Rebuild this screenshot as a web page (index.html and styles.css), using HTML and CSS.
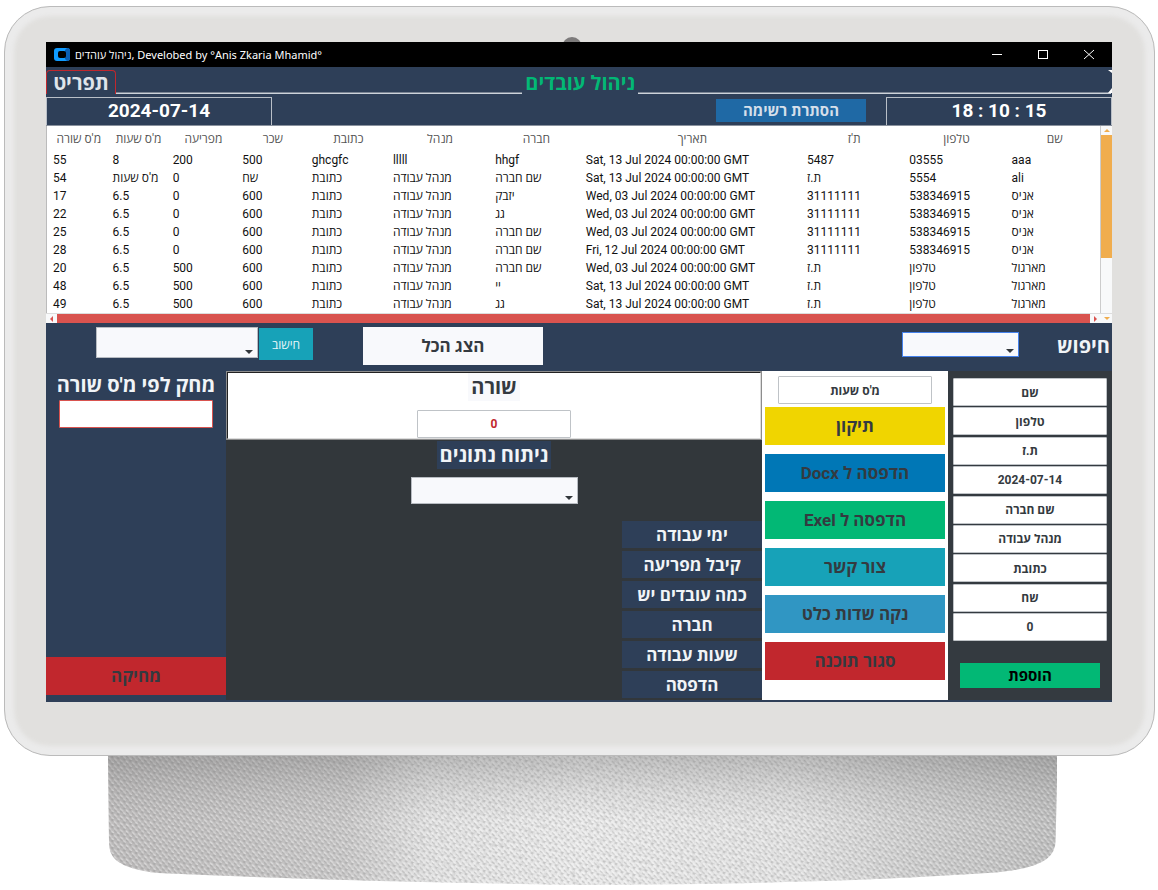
FILE: index.html
```html
<!DOCTYPE html>
<html lang="he">
<head>
<meta charset="utf-8">
<title>ניהול עובדים</title>
<link rel="stylesheet" href="styles.css">
</head>
<body>
<div class="device">
  <span class="camera"></span>
  <main class="screen">
    <header class="titlebar">
      <svg class="logo" viewBox="0 0 16 14" width="16" height="14" aria-hidden="true"><rect width="16" height="13" rx="3" fill="#0f9bff"/><path d="M13 0a3 3 0 0 1 3 3v7a3 3 0 0 1-3 3l-2-2V2z" fill="#0a5fb4"/><rect x="4" y="3" width="8" height="7" rx="2" fill="#000"/></svg>
      <h1 class="caption">ניהול עוהדים, Develobed by °Anis Zkaria Mhamid°</h1>
      <div class="window-buttons">
        <button aria-label="Minimize"><svg viewBox="0 0 12 12" width="12" height="12"><path d="M1 5.500h10" stroke="#fff" fill="none"/></svg></button>
        <button aria-label="Maximize"><svg viewBox="0 0 12 12" width="12" height="12"><rect x="1.500" y="1.500" width="9" height="8" stroke="#fff" fill="none"/></svg></button>
        <button aria-label="Close"><svg viewBox="0 0 12 12" width="12" height="12"><path d="M1 1l10 9M11 1L1 10" stroke="#fff" fill="none"/></svg></button>
      </div>
    </header>
    <nav class="menu-row">
      <button class="tab">תפריט</button>
      <span class="rule"></span>
      <h2 class="heading">ניהול עובדים</h2>
      <span class="rule"></span>
      <svg class="menu-end" viewBox="0 0 4 24" width="4" height="24" aria-hidden="true"><path d="M0 0h4v3zM4 18v5H0z" fill="#fff"/></svg>
    </nav>
    <div class="clock-row">
      <div class="readout">2024-07-14</div>
      <button class="hide-list">הסתרת רשימה</button>
      <div class="readout">18 : 10 : 15</div>
    </div>
    <section class="list">
      <table class="records">
        <colgroup><col class="w-id"><col class="w-id"><col class="w-pay"><col class="w-pay"><col class="w-address"><col class="w-manager"><col class="w-company"><col class="w-date"><col class="w-manager"><col class="w-manager"><col></colgroup>
        <thead><tr><th>מ'ס שורה</th><th>מ'ס שעות</th><th>מפריעה</th><th>שכר</th><th>כתובת</th><th>מנהל</th><th>חברה</th><th>תאריך</th><th>ת'ז</th><th>טלפון</th><th>שם</th></tr></thead>
        <tbody>
          <tr><td>55</td><td>8</td><td>200</td><td>500</td><td>ghcgfc</td><td>lllll</td><td>hhgf</td><td>Sat, 13 Jul 2024 00:00:00 GMT</td><td>5487</td><td>03555</td><td>aaa</td></tr>
          <tr><td>54</td><td>מ'ס שעות</td><td>0</td><td>שח</td><td>כתובת</td><td>מנהל עבודה</td><td>שם חברה</td><td>Sat, 13 Jul 2024 00:00:00 GMT</td><td>ת.ז</td><td>5554</td><td>ali</td></tr>
          <tr><td>17</td><td>6.5</td><td>0</td><td>600</td><td>כתובת</td><td>מנהל עבודה</td><td>יזבק</td><td>Wed, 03 Jul 2024 00:00:00 GMT</td><td>31111111</td><td>538346915</td><td>אניס</td></tr>
          <tr><td>22</td><td>6.5</td><td>0</td><td>600</td><td>כתובת</td><td>מנהל עבודה</td><td>גג</td><td>Wed, 03 Jul 2024 00:00:00 GMT</td><td>31111111</td><td>538346915</td><td>אניס</td></tr>
          <tr><td>25</td><td>6.5</td><td>0</td><td>600</td><td>כתובת</td><td>מנהל עבודה</td><td>שם חברה</td><td>Wed, 03 Jul 2024 00:00:00 GMT</td><td>31111111</td><td>538346915</td><td>אניס</td></tr>
          <tr><td>28</td><td>6.5</td><td>0</td><td>600</td><td>כתובת</td><td>מנהל עבודה</td><td>שם חברה</td><td>Fri, 12 Jul 2024 00:00:00 GMT</td><td>31111111</td><td>538346915</td><td>אניס</td></tr>
          <tr><td>20</td><td>6.5</td><td>500</td><td>600</td><td>כתובת</td><td>מנהל עבודה</td><td>שם חברה</td><td>Wed, 03 Jul 2024 00:00:00 GMT</td><td>ת.ז</td><td>טלפון</td><td>מארגול</td></tr>
          <tr><td>48</td><td>6.5</td><td>500</td><td>600</td><td>כתובת</td><td>מנהל עבודה</td><td>יי</td><td>Sat, 13 Jul 2024 00:00:00 GMT</td><td>ת.ז</td><td>טלפון</td><td>מארגול</td></tr>
          <tr><td>49</td><td>6.5</td><td>500</td><td>600</td><td>כתובת</td><td>מנהל עבודה</td><td>גג</td><td>Sat, 13 Jul 2024 00:00:00 GMT</td><td>ת.ז</td><td>טלפון</td><td>מארגול</td></tr>
        </tbody>
      </table>
      <div class="scroll-y"><span class="arrow up"></span><span class="thumb"></span></div>
      <div class="scroll-x"><span class="arrow left"></span><span class="thumb"></span><span class="arrow right"></span><span class="arrow down"></span></div>
    </section>
    <div class="toolbar">
      <span class="combo calc"><select aria-label="חישוב"><option></option></select></span>
      <button class="calc-button">חישוב</button>
      <button class="show-all">הצג הכל</button>
      <span class="combo search"><select id="search"><option></option></select></span>
      <label class="search-label" for="search">חיפוש</label>
    </div>
    <div class="panels">
      <section class="delete-panel">
        <label for="row-id">מחק לפי מ'ס שורה</label>
        <input id="row-id" class="entry danger">
        <button class="big red">מחיקה</button>
      </section>
      <section class="center-panel">
        <div class="row-box">
          <label for="row-no">שורה</label>
          <input id="row-no" class="entry number" value="0">
        </div>
        <label class="analysis" for="analysis">ניתוח נתונים</label>
        <span class="combo stats"><select id="analysis"><option></option></select></span>
        <div class="stat-buttons">
          <button>ימי עבודה</button>
          <button>קיבל מפריעה</button>
          <button>כמה עובדים יש</button>
          <button>חברה</button>
          <button>שעות עבודה</button>
          <button>הדפסה</button>
        </div>
      </section>
      <section class="action-panel">
        <input class="entry" aria-label="מ'ס שעות" dir="rtl" value="מ'ס שעות">
        <div class="actions" dir="rtl">
          <button class="big yellow">תיקון</button>
          <button class="big blue">הדפסה ל Docx</button>
          <button class="big green">הדפסה ל Exel</button>
          <button class="big teal">צור קשר</button>
          <button class="big sky">נקה שדות כלט</button>
          <button class="big red">סגור תוכנה</button>
        </div>
      </section>
      <form class="add-panel">
        <div class="fields">
          <input class="entry" aria-label="שם" value="שם">
          <input class="entry" aria-label="טלפון" value="טלפון">
          <input class="entry" aria-label="ת.ז" value="ת.ז">
          <input class="entry" aria-label="תאריך" value="2024-07-14">
          <input class="entry" aria-label="שם חברה" value="שם חברה">
          <input class="entry" aria-label="מנהל עבודה" value="מנהל עבודה">
          <input class="entry" aria-label="כתובת" value="כתובת">
          <input class="entry" aria-label="שכר" value="שח">
          <input class="entry" aria-label="מפריעה" value="0">
        </div>
        <button class="add" type="button">הוספת</button>
      </form>
    </div>
  </main>
</div>
<svg class="stand" viewBox="0 0 950 129" preserveAspectRatio="none" aria-hidden="true">
  <defs>
    <pattern id="weave" width="6" height="7" patternUnits="userSpaceOnUse" patternTransform="skewY(12)">
      <path d="M0 1l3 2M3 4l3 2" stroke="#fff" stroke-opacity=".4" stroke-width="1.600"/>
      <path d="M0 3l3 2M3 6l3 1M3 0l2 1" stroke="#777" stroke-opacity=".3" stroke-width="1.200"/>
    </pattern>
    <linearGradient id="sides" x2="1" y2="0">
      <stop offset="0" stop-color="#bdbbbb"/><stop offset=".25" stop-color="#c8c7c7"/><stop offset=".34" stop-color="#e4e4e4"/><stop offset=".5" stop-color="#ececec"/><stop offset=".72" stop-color="#e4e4e4"/><stop offset=".85" stop-color="#cecece"/><stop offset="1" stop-color="#bdbdbd"/>
    </linearGradient>
    <linearGradient id="shade" x2="0" y2="1">
      <stop offset="0" stop-color="#666" stop-opacity=".32"/><stop offset=".3" stop-color="#777" stop-opacity=".1"/><stop offset=".5" stop-color="#777" stop-opacity="0"/>
    </linearGradient>
    <filter id="grain" x="0" y="0" width="1" height="1">
      <feTurbulence type="fractalNoise" baseFrequency=".25" numOctaves="2" seed="4"/>
      <feColorMatrix values="0 0 0 0 .4  0 0 0 0 .4  0 0 0 0 .4  .7 0 0 0 -.3"/>
      <feComposite in2="SourceGraphic" operator="in"/>
    </filter>
    <path id="base" d="M0 0H950L948 85Q948 96 939 103Q925 114 880 117Q720 128 475 129Q250 126 50 117Q20 114 8 104Q1 98 1 86Z"/>
  </defs>
  <use href="#base" fill="url(#sides)"/>
  <use href="#base" fill="url(#weave)"/>
  <use href="#base" filter="url(#grain)"/>
  <use href="#base" fill="url(#shade)"/>
</svg>
</body>
</html>
```

FILE: styles.css
```css
* { box-sizing: border-box; }

body {
  margin: 0;
  padding: 6px 3px 4px 4px;
  background: #fff;
  color: #111;
  font-family: Roboto, "Open Sans", "Noto Sans", "DejaVu Sans", sans-serif;
  font-size: 12px;
}

button, input, select { font: inherit; margin: 0; border: 0; padding: 0; border-radius: 0; }
button { cursor: pointer; }
h1, h2 { margin: 0; font-size: inherit; }

.device {
  position: relative;
  padding: 35px 42px 53px 41px;
  border: 1px solid #bbb;
  border-radius: 46px;
  background: #e1e0de;
  box-shadow: inset 0 0 4px 9px #ebebeb;
}
.camera {
  position: absolute;
  top: 30px;
  left: 557px;
  width: 20px;
  height: 20px;
  border-radius: 50%;
  background: #7d7b7b;
}
.screen { position: relative; background: #2e3f58; }

.titlebar { display: flex; align-items: center; height: 25px; padding-left: 8px; background: #000; color: #fff; }
.logo { flex: none; margin-right: 5px; }
.caption { flex: 1; font-size: 11px; font-weight: 400; line-height: 23px; font-family: "Noto Sans", "Open Sans", sans-serif; }
.window-buttons { display: flex; }
.window-buttons button { display: grid; place-items: center; width: 46px; height: 25px; background: none; }

.menu-row { display: flex; align-items: flex-end; height: 30px; padding-bottom: 3px; }
.tab {
  width: 70px;
  height: 24px;
  border: 1px solid #c1272d;
  border-bottom: 0;
  border-radius: 4px 4px 0 0;
  background: none;
  color: #dfe4ea;
  font-size: 20px;
  font-weight: 700;
  line-height: 24px;
}
.rule { flex: 1; height: 2px; border-bottom: 1px solid #cdd3da; background: #7b8594; }
.heading { padding: 0 3px; color: #02b875; font-size: 20px; line-height: 22px; }
.heading + .rule { flex: 0 1 473px; }
.menu-end { flex: none; margin-left: -3px; }

.clock-row { display: flex; align-items: stretch; height: 29px; border-bottom: 1px solid #8a929e; }
.readout {
  width: 226px;
  border: 1px solid #b9bfc7;
  border-bottom: 0;
  color: #fff;
  font-size: 19px;
  font-weight: 700;
  line-height: 26px;
  text-align: center;
}
.hide-list { width: 150px; height: 23px; margin: 2px 20px 0 auto; background: #1f69a5; color: #d5dfea; font-size: 15px; font-weight: 700; line-height: 22px; }

.list { display: grid; grid-template-columns: 1fr 11px; background: #fff; }
.records { width: 100%; table-layout: fixed; border-collapse: collapse; border-left: 1px solid #bbb; border-right: 1px solid #ccc; }
.w-id { width: 5.7%; }
.w-pay { width: 6.6%; }
.w-address { width: 7.7%; }
.w-manager { width: 9.7%; }
.w-company { width: 8.6%; }
.w-date { width: 21%; }
.records th { height: 25px; padding: 0 0 0 4px; color: #555; font-size: 12px; font-weight: 400; overflow: hidden; white-space: nowrap; }
.records td { height: 18px; padding: 0 0 0 6px; white-space: nowrap; line-height: 18px; }

.scroll-y { display: flex; flex-direction: column; background: #f8f9fa; }
.scroll-y .arrow { height: 9px; }
.scroll-y .thumb { height: 123px; background: #f0ad4e; }
.scroll-x { grid-column: 1 / -1; display: flex; height: 10px; border-top: 1px solid #ddd; background: #f8f9fa; }
.scroll-x .arrow { width: 11px; }
.scroll-x .thumb { flex: 1; background: #d9534f; }
.arrow { display: grid; place-items: center; }
.arrow::before { content: ""; border: 3px solid transparent; }
.arrow.up::before { border-top: 0; border-bottom-color: #f0ad4e; }
.arrow.down::before { border-bottom: 0; border-top-color: #f0ad4e; }
.arrow.left::before { border-left: 0; border-right-color: #d9534f; }
.arrow.right::before { border-right: 0; border-left-color: #d9534f; }

.toolbar { display: flex; align-items: flex-start; height: 48px; padding: 4px 2px 0 50px; }
.combo { position: relative; display: block; }
.combo select { display: block; width: 100%; height: 100%; border: 1px solid #b8bcc2; background: #f8f9fc; appearance: none; }
.combo::after { content: ""; position: absolute; right: 5px; bottom: 4px; border: 4px solid transparent; border-top-color: #32373b; border-bottom: 0; pointer-events: none; }
.calc { width: 162px; height: 31px; margin-right: 1px; }
.calc-button { width: 54px; height: 32px; margin: 1px 50px 0 0; background: #17a2b8; color: #e8f6f8; }
.show-all { width: 180px; height: 38px; background: #f8f9fc; color: #343a40; font-size: 17px; font-weight: 700; line-height: 36px; }
.search { width: 117px; height: 25px; margin: 5px 0 0 auto; }
.search select { border-color: #4582ec; }
.search-label { width: 91px; color: #f1f4f7; font-size: 20px; font-weight: 700; line-height: 38px; text-align: right; }

.panels { display: grid; grid-template-columns: 180px 1fr 186px 164px; min-height: 331px; padding-bottom: 2px; }
.entry { display: block; width: 154px; height: 28px; border: 1px solid #bfc3c7; border-radius: 1px; background: #fff; color: #343a40; font-size: 12px; font-weight: 700; text-align: center; }
.big { display: block; width: 100%; height: 38px; color: #343a40; font-size: 17px; font-weight: 700; line-height: 36px; }
.red { background: #c1272d; }
.yellow { background: #f0d500; }
.blue { background: #0077b6; }
.green { background: #02b875; }
.teal { background: #17a2b8; }
.sky { background: #3096c3; }

.delete-panel { display: flex; flex-direction: column; align-items: center; padding-bottom: 5px; color: #f1f4f7; font-size: 20px; font-weight: 700; line-height: 29px; white-space: nowrap; }
.delete-panel .big { margin-top: auto; }
.danger { border-color: #d9534f; }

.center-panel { display: flex; flex-direction: column; align-items: center; background: #32373b; }
.row-box { align-self: stretch; display: flex; flex-direction: column; align-items: center; height: 69px; border: 2px solid #dcdcdc; border-top-color: #222; border-left-color: #222; outline: 1px solid #8d8d8d; outline-offset: -1px; background: #fff; }
.row-box label { padding: 0 3px; background: #f8f9fc; color: #343a40; font-size: 20px; font-weight: 700; line-height: 28px; }
.row-box .entry { margin-top: 9px; }
.number { color: #c1272d; }
.analysis { margin-top: 1px; padding: 0 3px; background: #2e3f58; color: #f1f4f7; font-size: 20px; font-weight: 700; line-height: 28px; }
.stats { width: 167px; height: 27px; margin-top: 8px; }
.stat-buttons { align-self: flex-end; display: grid; gap: 3px; width: 140px; margin: auto 0 2px; }
.stat-buttons button { height: 27px; background: #2e3f58; color: #f1f4f7; font-size: 17px; font-weight: 700; line-height: 26px; }

.action-panel { display: flex; flex-direction: column; align-items: center; padding: 5px 3px 0; background: #fff; }
.actions { display: grid; gap: 9px; width: 100%; margin-top: 3px; }

.add-panel { display: flex; flex-direction: column; align-items: center; padding: 7px 5px 12px; background: #343a40; }
.fields { flex: 1; display: flex; flex-direction: column; justify-content: space-between; }
.add { width: 140px; height: 25px; margin-top: 22px; background: #02b875; color: #000; font-size: 15px; font-weight: 700; line-height: 24px; }

.stand { display: block; width: 82.5%; height: 129px; margin-left: 9%; }
```
